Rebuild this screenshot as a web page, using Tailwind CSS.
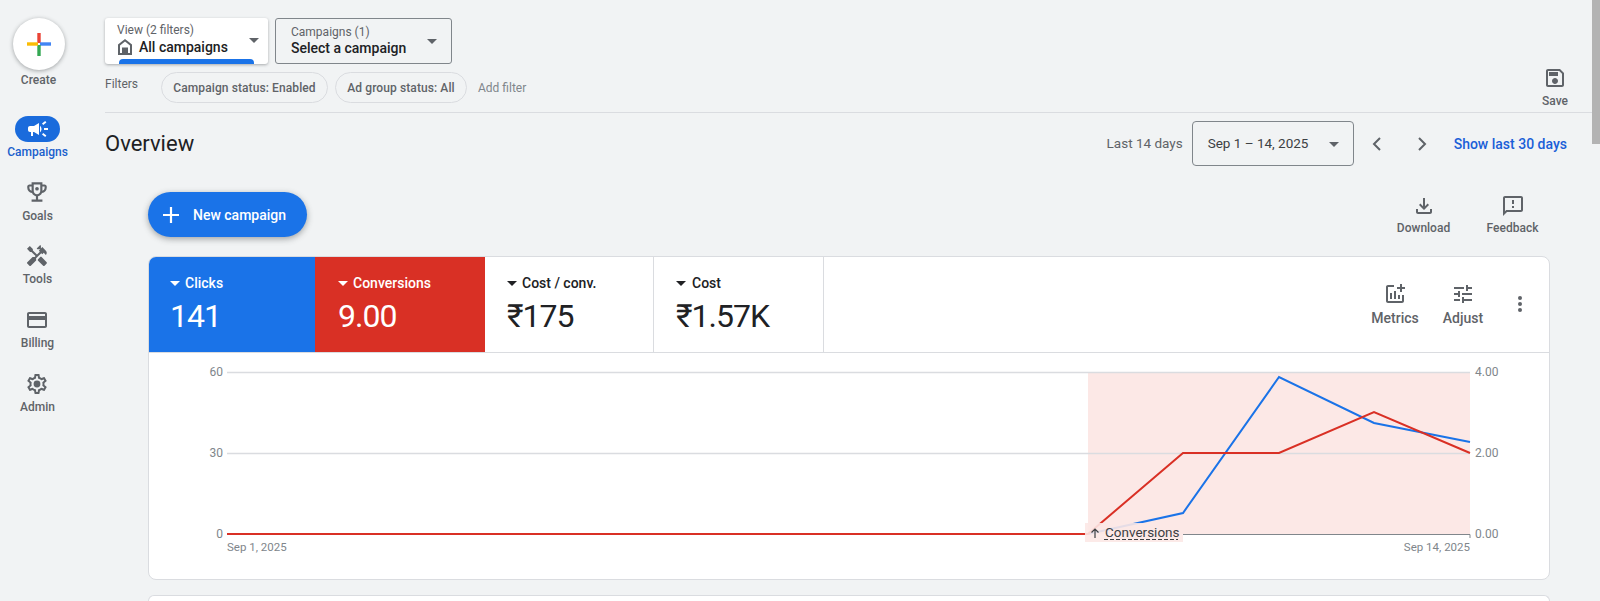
<!DOCTYPE html>
<html lang="en">
<head>
    <meta charset="UTF-8">
    <title>Overview</title>
    <script src="https://cdn.jsdelivr.net/npm/@tailwindcss/browser@4"></script>
</head>
<body class="relative h-[601px] overflow-hidden bg-[#f1f3f4] font-[Roboto,sans-serif] text-[#5f6368]">
    <div class="flex h-[601px] overflow-hidden">
        <!-- Side navigation -->
        <aside class="w-[105px] shrink-0 pt-[18px]">
            <div class="flex w-[75px] flex-col items-center">
                <div class="ml-[2px] flex h-[52px] w-[52px] items-center justify-center rounded-full bg-white shadow-[0_1px_4px_rgba(60,64,67,0.45)]">
                    <svg width="24" height="24" viewBox="0 0 24 24" fill="none" stroke-width="3.4">
                        <path d="M12 1v10" stroke="#ea4335"/>
                        <path d="M13 12h11" stroke="#4285f4"/>
                        <path d="M12 13v11" stroke="#34a853"/>
                        <path d="M0 12h11" stroke="#fbbc04"/>
                    </svg>
                </div>
                <span class="mt-[2px] ml-[2px] text-xs leading-[16px] font-[480]">Create</span>

                <div class="mt-[28px] flex h-[26px] w-[45px] items-center justify-center rounded-full bg-[#1a6bdc]">
                    <svg width="24" height="24" viewBox="0 0 24 24" fill="#fff"><path d="M18 11v2h4v-2h-4zm-2 6.610c.96.71 2.210 1.650 3.200 2.390.4-.53.8-1.070 1.200-1.600-.99-.74-2.240-1.680-3.200-2.400-.4.54-.8 1.080-1.200 1.610zM20.400 5.600c-.4-.53-.8-1.070-1.200-1.600-.99.74-2.240 1.680-3.200 2.400.4.53.8 1.070 1.200 1.600.96-.72 2.210-1.650 3.200-2.400zM4 9c-1.100 0-2 .9-2 2v2c0 1.100.9 2 2 2h1v4h2v-4h1l5 3V6L8 9H4zm11.500 3c0-1.330-.58-2.530-1.500-3.350v6.690c.92-.81 1.500-2.010 1.500-3.340z"/></svg>
                </div>
                <span class="mt-[2px] text-xs leading-[16px] font-[480] text-[#1a5fcc]">Campaigns</span>

                <div class="mt-[20px] flex flex-col items-center gap-[9px]">
                    <div class="flex h-[55px] flex-col items-center">
                        <svg class="-my-[1px]" width="26" height="26" viewBox="0 0 24 24" fill="#5f6368"><path d="M19 5h-2V3H7v2H5c-1.100 0-2 .9-2 2v1c0 2.550 1.920 4.630 4.390 4.940.63 1.500 1.980 2.630 3.610 2.960V19H7v2h10v-2h-4v-3.100c1.630-.33 2.980-1.460 3.610-2.960C19.080 12.630 21 10.550 21 8V7c0-1.100-.9-2-2-2zM5 8V7h2v3.820C5.840 10.400 5 9.300 5 8zm7 6c-1.650 0-3-1.350-3-3V5h6v6c0 1.650-1.350 3-3 3zm7-6c0 1.300-.84 2.400-2 2.820V7h2v1z"/><circle cx="12" cy="9" r="1.700"/></svg>
                        <span class="mt-[4px] text-xs leading-[16px] font-[480]">Goals</span>
                    </div>
                    <div class="flex h-[55px] flex-col items-center">
                        <svg width="24" height="24" viewBox="0 0 24 24" fill="#5f6368"><path d="M21.670 18.170l-5.300-5.300h-.99l-2.540 2.540v.99l5.300 5.300c.39.39 1.020.39 1.410 0l2.120-2.120c.39-.38.39-1.020 0-1.410z"/><path d="M17.340 10.190l1.410-1.410 2.120 2.120c1.170-1.170 1.170-3.070 0-4.240l-3.540-3.540-1.410 1.410V1.710l-.7-.71-3.540 3.540.71.71h2.830l-1.410 1.410 1.060 1.060-2.890 2.890-4.130-4.130V5.060L4.830 2.040 2 4.870 5.030 7.900h1.410l4.130 4.130-.85.85H7.600l-5.300 5.300c-.39.39-.39 1.020 0 1.410l2.120 2.120c.39.39 1.020.39 1.410 0l5.300-5.300v-2.120l5.150-5.150 1.060 1.050z"/></svg>
                        <span class="mt-[3px] text-xs leading-[16px] font-[480]">Tools</span>
                    </div>
                    <div class="flex h-[55px] flex-col items-center">
                        <svg width="24" height="24" viewBox="0 0 24 24" fill="#5f6368"><path d="M20 4H4c-1.110 0-1.990.89-1.990 2L2 18c0 1.110.89 2 2 2h16c1.110 0 2-.89 2-2V6c0-1.110-.89-2-2-2zm0 14H4v-6h16v6zm0-10H4V6h16v2z"/></svg>
                        <span class="mt-[3px] text-xs leading-[16px] font-[480]">Billing</span>
                    </div>
                    <div class="flex flex-col items-center">
                        <svg width="24" height="24" viewBox="0 0 24 24" fill="#5f6368"><path d="M19.430 12.980c.04-.32.07-.64.07-.98 0-.34-.03-.66-.07-.98l2.110-1.650c.19-.15.24-.42.12-.64l-2-3.460c-.09-.16-.26-.25-.44-.25-.06 0-.12.01-.17.03l-2.490 1c-.52-.4-1.080-.73-1.690-.98l-.38-2.650C14.460 2.180 14.250 2 14 2h-4c-.25 0-.46.18-.49.42l-.38 2.650c-.61.25-1.170.59-1.690.98l-2.490-1c-.06-.02-.12-.03-.18-.03-.17 0-.34.09-.43.25l-2 3.460c-.13.22-.07.49.12.64l2.110 1.650c-.04.32-.07.65-.07.98 0 .33.03.66.07.98l-2.110 1.650c-.19.15-.24.42-.12.64l2 3.460c.09.16.26.25.44.25.06 0 .12-.01.17-.03l2.490-1c.52.4 1.080.73 1.690.98l.38 2.650c.03.24.24.42.49.42h4c.25 0 .46-.18.49-.42l.38-2.650c.61-.25 1.170-.59 1.690-.98l2.490 1c.06.02.12.03.18.03.17 0 .34-.09.43-.25l2-3.460c.12-.22.07-.49-.12-.64l-2.110-1.650zm-1.980-1.710c.04.31.05.52.05.73 0 .21-.02.43-.05.73l-.14 1.130.89.7 1.080.84-.7 1.210-1.270-.51-1.040-.42-.9.68c-.43.32-.84.56-1.250.73l-1.060.43-.16 1.130-.2 1.350h-1.400l-.19-1.350-.16-1.130-1.060-.43c-.43-.18-.83-.41-1.230-.71l-.91-.7-1.060.43-1.270.51-.7-1.210 1.080-.84.89-.7-.14-1.130c-.03-.31-.05-.54-.05-.74s.02-.43.05-.73l.14-1.130-.89-.7-1.080-.84.7-1.210 1.270.51 1.040.42.9-.68c.43-.32.84-.56 1.250-.73l1.060-.43.16-1.130.2-1.350h1.390l.19 1.350.16 1.130 1.060.43c.43.18.83.41 1.230.71l.91.7 1.060-.43 1.270-.51.7 1.210-1.070.85-.89.7.14 1.130z"/><circle cx="12" cy="12" r="3.400"/></svg>
                        <span class="mt-[3px] text-xs leading-[16px] font-[480]">Admin</span>
                    </div>
                </div>
            </div>
        </aside>

        <main class="min-w-0 flex-1 pr-[8px]">
            <!-- Selectors and filters -->
            <div class="flex h-[113px] justify-between border-b border-[#dadce0] pt-[18px] pr-[25px]">
                <div>
                    <div class="flex gap-[7px]">
                        <div class="relative h-[46px] w-[163px] overflow-hidden rounded-[3px] bg-white pt-[4px] pl-[12px] shadow-[0_1px_3px_rgba(60,64,67,0.4)]">
                            <div class="text-xs leading-[16px]">View (2 filters)</div>
                            <div class="flex items-center gap-[6px] text-[14px] leading-[18px] font-[480] text-[#202124]">
                                <svg width="16" height="18" viewBox="0 0 16 18" fill="#5f6368"><path d="M8 1L1 6.500V17h14V6.500L8 1zm5 14h-2V9.500H5V15H3V7.500l5-4 5 4V15z"/><path d="M5.500 10h5v5h-5z"/></svg>
                                All campaigns
                            </div>
                            <span class="absolute top-[20px] right-[9px] h-0 w-0 border-x-[5px] border-t-[5px] border-x-transparent border-t-[#5f6368]"></span>
                            <span class="absolute right-[14px] bottom-0 left-[14px] h-[5px] rounded-t-[4px] bg-[#1a73e8]"></span>
                        </div>
                        <div class="relative h-[46px] w-[177px] rounded-[3px] border border-[#80868b] pt-[5px] pl-[15px]">
                            <div class="text-xs leading-[16px]">Campaigns (1)</div>
                            <div class="text-[14px] leading-[16px] font-[480] text-[#202124]">Select a campaign</div>
                            <span class="absolute top-[20px] right-[14px] h-0 w-0 border-x-[5px] border-t-[5px] border-x-transparent border-t-[#5f6368]"></span>
                        </div>
                    </div>
                    <div class="mt-[8px] flex items-start text-xs">
                        <span class="w-[56px] pt-[4px] leading-[16px]">Filters</span>
                        <span class="flex h-[31px] w-[167px] items-center justify-center rounded-full border border-[#dadce0] font-medium tracking-[0.1px]">Campaign status: Enabled</span>
                        <span class="ml-[7px] flex h-[31px] w-[132px] items-center justify-center rounded-full border border-[#dadce0] font-medium tracking-[0.1px]">Ad group status: All</span>
                        <span class="ml-[11px] flex h-[31px] items-center text-[#80868b]">Add filter</span>
                    </div>
                </div>
                <div class="flex w-[24px] flex-col items-center pt-[48px] text-xs font-[480]">
                    <svg class="shrink-0" width="24" height="24" viewBox="0 0 24 24" fill="#5f6368"><path d="M17 3H5c-1.110 0-2 .9-2 2v14c0 1.100.89 2 2 2h14c1.100 0 2-.9 2-2V7l-4-4zm2 16H5V5h11.170L19 7.830V19zm-7-7c-1.660 0-3 1.340-3 3s1.340 3 3 3 3-1.340 3-3-1.340-3-3-3zM6 6h9v4H6z"/></svg>
                    <span class="mt-[3px] leading-[16px]">Save</span>
                </div>
            </div>

            <!-- Overview title and date range -->
            <div class="mt-[8px] flex h-[45px] items-center justify-between pr-[25px]">
                <h1 class="text-[22px] text-[#202124]">Overview</h1>
                <div class="flex items-center">
                    <span class="text-[13.5px]">Last 14 days</span>
                    <div class="relative ml-[9px] flex h-[45px] w-[162px] items-center rounded-[4px] border border-[#80868b] pl-[15px] text-[13.5px] text-[#3c4043]">
                        Sep 1 – 14, 2025
                        <span class="absolute top-[20px] right-[14px] h-0 w-0 border-x-[5px] border-t-[5px] border-x-transparent border-t-[#5f6368]"></span>
                    </div>
                    <svg class="ml-[11px]" width="24" height="24" viewBox="0 0 24 24" fill="none" stroke="#5f6368" stroke-width="2"><path d="M15 6l-6 6 6 6"/></svg>
                    <svg class="ml-[21px]" width="24" height="24" viewBox="0 0 24 24" fill="none" stroke="#5f6368" stroke-width="2"><path d="M9 6l6 6-6 6"/></svg>
                    <span class="ml-[20px] text-sm font-[480] text-[#1a5fd8]">Show last 30 days</span>
                </div>
            </div>

            <!-- Campaign actions -->
            <div class="mt-[26px] ml-[43px] flex h-[45px] justify-between">
                <button class="flex h-[45px] w-[159px] items-center gap-[11px] rounded-full bg-[#1a73e8] pl-[12px] text-sm font-medium text-white shadow-[0_2px_6px_rgba(60,64,67,0.45)]">
                    <svg width="22" height="22" viewBox="0 0 22 22" fill="none" stroke="#fff" stroke-width="2.200"><path d="M11 3v16M3 11h16"/></svg>
                    New campaign
                </button>
                <div class="flex pt-[2px] pr-[52px] text-xs font-[480]">
                    <div class="flex w-[55px] flex-col items-center">
                        <svg width="24" height="24" viewBox="0 0 24 24" fill="#5f6368"><path d="M18 15v3H6v-3H4v3c0 1.100.9 2 2 2h12c1.100 0 2-.9 2-2v-3h-2zm-1-4l-1.410-1.410L13 12.170V4h-2v8.170L8.410 9.590 7 11l5 5 5-5z"/></svg>
                        <span class="mt-[2px] leading-[16px]">Download</span>
                    </div>
                    <div class="ml-[34px] flex w-[55px] flex-col items-center">
                        <svg width="24" height="24" viewBox="0 0 24 24" fill="#5f6368"><path d="M20 2H4c-1.100 0-1.990.9-1.990 2L2 22l4-4h14c1.100 0 2-.9 2-2V4c0-1.100-.9-2-2-2zm0 14H5.170L4 17.170V4h16v12zm-9-4h2v2h-2zm0-6h2v4h-2z"/></svg>
                        <span class="mt-[2px] leading-[16px]">Feedback</span>
                    </div>
                </div>
            </div>

            <!-- Overview card -->
            <section class="mt-[19px] ml-[43px] w-[1402px] overflow-hidden rounded-[8px] border border-[#dadce0] bg-white">
                <div class="flex h-[96px] border-b border-[#dadce0]">
                    <div class="w-[166px] bg-[#1a73e8] pt-[16px] pl-[21px] text-white">
                        <div class="flex items-center gap-[5px] text-[14px] leading-[20px] font-[480]"><span class="h-0 w-0 border-x-[5px] border-t-[5px] border-x-transparent border-t-white"></span>Clicks</div>
                        <div class="mt-[2px] text-[32px] leading-[42px] tracking-[-1px]">141</div>
                    </div>
                    <div class="w-[170px] bg-[#d93025] pt-[16px] pl-[23px] text-white">
                        <div class="flex items-center gap-[5px] text-[14px] leading-[20px] font-[480]"><span class="h-0 w-0 border-x-[5px] border-t-[5px] border-x-transparent border-t-white"></span>Conversions</div>
                        <div class="mt-[2px] text-[32px] leading-[42px] tracking-[-1px]">9.00</div>
                    </div>
                    <div class="w-[169px] border-r border-[#dadce0] pt-[16px] pl-[22px] text-[#202124]">
                        <div class="flex items-center gap-[5px] text-[14px] leading-[20px] font-[480]"><span class="h-0 w-0 border-x-[5px] border-t-[5px] border-x-transparent border-t-[#202124]"></span>Cost / conv.</div>
                        <div class="mt-[2px] text-[32px] leading-[42px] tracking-[-1px]">₹175</div>
                    </div>
                    <div class="w-[170px] border-r border-[#dadce0] pt-[16px] pl-[22px] text-[#202124]">
                        <div class="flex items-center gap-[6px] text-[14px] leading-[20px] font-[480]"><span class="h-0 w-0 border-x-[5px] border-t-[5px] border-x-transparent border-t-[#202124]"></span>Cost</div>
                        <div class="mt-[2px] text-[32px] leading-[42px] tracking-[-1px]">₹1.57K</div>
                    </div>
                    <div class="ml-auto flex items-start pt-[25px] pr-[17px] text-[14px] font-[480]">
                        <div class="flex w-[50px] flex-col items-center">
                            <svg width="24" height="24" viewBox="0 0 24 24" fill="#5f6368"><path d="M22 5v2h-3v3h-2V7h-3V5h3V2h2v3h3zm-3 14H5V5h6V3H5c-1.100 0-2 .9-2 2v14c0 1.100.9 2 2 2h14c1.100 0 2-.9 2-2v-6h-2v6zm-4-6v4h2v-4h-2zm-4 4h2V9h-2v8zm-2 0v-6H7v6h2z"/></svg>
                            <span class="mt-[3px] leading-[18px]">Metrics</span>
                        </div>
                        <div class="ml-[18px] flex w-[50px] flex-col items-center">
                            <svg width="24" height="24" viewBox="0 0 24 24" fill="#5f6368"><path d="M3 17v2h6v-2H3zM3 5v2h10V5H3zm10 16v-2h8v-2h-8v-2h-2v6h2zM7 9v2H3v2h4v2h2V9H7zm14 4v-2H11v2h10zm-6-4h2V7h4V5h-4V3h-2v6z"/></svg>
                            <span class="mt-[3px] leading-[18px]">Adjust</span>
                        </div>
                        <svg class="mt-[10px] ml-[20px]" width="24" height="24" viewBox="0 0 24 24" fill="#5f6368"><circle cx="12" cy="6" r="2"/><circle cx="12" cy="12" r="2"/><circle cx="12" cy="18" r="2"/></svg>
                    </div>
                </div>

                <!-- Chart, drawn in page coordinates -->
                <svg class="block" width="1400" height="226" viewBox="149 353 1400 226" font-family="Roboto, sans-serif" font-size="12" fill="#80868b">
                    <rect x="1088" y="372" width="382" height="162" fill="#fce8e6"/>
                    <path d="M227 372.500H1470M227 453.500H1470" stroke="#dadce0" stroke-width="1.500"/>
                    <path d="M1183 534.500H1470V538" stroke="#80868b" fill="none"/>
                    <text x="223" y="376" text-anchor="end">60</text>
                    <text x="223" y="457" text-anchor="end">30</text>
                    <text x="223" y="538" text-anchor="end">0</text>
                    <text x="1475" y="376">4.00</text>
                    <text x="1475" y="457">2.00</text>
                    <text x="1475" y="538">0.00</text>
                    <text x="227" y="551" font-size="11.500">Sep 1, 2025</text>
                    <text x="1470" y="551" text-anchor="end" font-size="11.500">Sep 14, 2025</text>
                    <polyline points="1088,534 1183,513 1279,377 1374,423 1470,442" fill="none" stroke="#1a73e8" stroke-width="2"/>
                    <polyline points="227,534 1088,534 1183,453 1279,453 1374,412 1470,453" fill="none" stroke="#d93025" stroke-width="2"/>
                    <rect x="1085" y="523" width="98" height="19" fill="#fce8e6" fill-opacity="0.9"/>
                    <path d="M1095 538v-9M1091.500 532.500l3.500-3.500 3.500 3.500" fill="none" stroke="#3c4043" stroke-width="1.200"/>
                    <text x="1105" y="537" font-size="13.500" fill="#3c4043">Conversions</text>
                    <path d="M1104 539.500H1178" stroke="#3c4043" stroke-dasharray="4 2"/>
                </svg>
            </section>

            <div class="mt-[15px] ml-[43px] h-[6px] w-[1402px] rounded-t-[8px] border-x border-t border-[#dadce0] bg-white"></div>
        </main>
    </div>

    <!-- Scrollbar thumb -->
    <div class="absolute top-0 right-0 h-[144px] w-[8px] bg-[#b3b3b3]"></div>
</body>
</html>
